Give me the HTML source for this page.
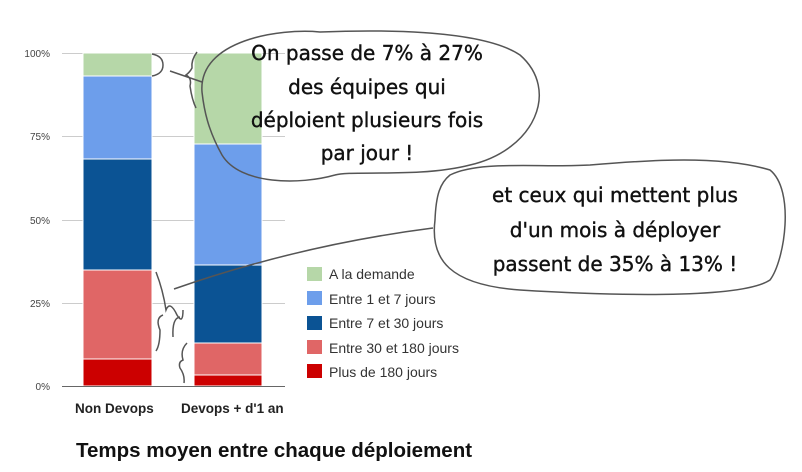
<!DOCTYPE html>
<html><head><meta charset="utf-8"><style>body{margin:0;background:#fff}svg{display:block}</style></head><body>
<svg width="802" height="472" viewBox="0 0 802 472" xmlns="http://www.w3.org/2000/svg" font-family="Liberation Sans, sans-serif">
<rect width="802" height="472" fill="#fff"/>
<g stroke="#ccc" stroke-width="1">
<line x1="62" y1="53.5" x2="285" y2="53.5"/><line x1="62" y1="136.5" x2="285" y2="136.5"/><line x1="62" y1="220.5" x2="285" y2="220.5"/><line x1="62" y1="303.5" x2="285" y2="303.5"/>
</g>
<g font-size="10" fill="#444" text-anchor="end">
<text x="50" y="57">100%</text><text x="50" y="140">75%</text><text x="50" y="224">50%</text><text x="50" y="307">25%</text><text x="50" y="390">0%</text>
</g>
<g stroke="#fff" stroke-width="1">
<rect x="83" y="53" width="69" height="23" fill="#b6d7a8"/>
<rect x="83" y="76" width="69" height="83" fill="#6d9eeb"/>
<rect x="83" y="159" width="69" height="111" fill="#0b5394"/>
<rect x="83" y="270" width="69" height="89" fill="#e06666"/>
<rect x="83" y="359" width="69" height="27" fill="#cc0000"/>
<rect x="194" y="53" width="68" height="91" fill="#b6d7a8"/>
<rect x="194" y="144" width="68" height="121" fill="#6d9eeb"/>
<rect x="194" y="265" width="68" height="78" fill="#0b5394"/>
<rect x="194" y="343" width="68" height="32" fill="#e06666"/>
<rect x="194" y="375" width="68" height="11" fill="#cc0000"/>
</g>
<line x1="62" y1="386.5" x2="285" y2="386.5" stroke="#666" stroke-width="1"/>
<g font-size="13.5" font-weight="bold" fill="#222">
<text x="75" y="413">Non Devops</text><text x="181" y="413">Devops + d'1 an</text>
</g>
<text x="76" y="457" font-size="20.5" font-weight="bold" fill="#111">Temps moyen entre chaque déploiement</text>
<g font-size="14" fill="#333">
<rect x="307" y="267" width="15" height="14" fill="#b6d7a8"/><text x="329" y="279">A la demande</text>
<rect x="307" y="291" width="15" height="14" fill="#6d9eeb"/><text x="329" y="304">Entre 1 et 7 jours</text>
<rect x="307" y="316" width="15" height="14" fill="#0b5394"/><text x="329" y="328">Entre 7 et 30 jours</text>
<rect x="307" y="340" width="15" height="14" fill="#e06666"/><text x="329" y="353">Entre 30 et 180 jours</text>
<rect x="307" y="364" width="15" height="14" fill="#cc0000"/><text x="329" y="377">Plus de 180 jours</text>
</g>
<g fill="none" stroke="#555" stroke-width="1.5">
<path d="M152 54 Q163 56 163 65 Q163 74 152 76"/>
<path d="M170 71 L202 82"/>
<path d="M197 52 Q191 60 192 68 Q190 72 186 75 Q192 78 190 86 Q192 100 196 108"/>
<path d="M156 272 Q163 290 166 310 Q170 300 177 315 Q183 325 183 310"/>
<path d="M163 315 Q155 318 160 330 Q160 345 156 351"/>
<path d="M180 317 Q172 318 173 337"/>
<path d="M187 343 Q180 350 183 360 Q178 362 180 368 Q185 375 184 383"/>
<path d="M174 289 Q300 245 433 228"/>
<path d="M202 92 C198 40 280 28 320 32 C370 30 480 28 520 55 C560 90 535 150 470 165 C420 178 350 170 335 175 C300 185 240 185 222 155 C208 130 204 110 202 92 Z"/>
<path d="M450 175 C480 160 540 168 590 165 C650 160 720 155 770 170 C795 190 785 260 770 280 C740 300 600 295 520 290 C450 285 430 260 435 220 C436 195 440 183 450 175 Z"/>
</g>
<g font-family="DejaVu Sans, sans-serif" font-size="20" fill="#111" text-anchor="middle" stroke="#111" stroke-width="0.4">
<text x="367" y="60">On passe de 7% à 27%</text>
<text x="367" y="94">des équipes qui</text>
<text x="367" y="127">déploient plusieurs fois</text>
<text x="367" y="160">par jour !</text>
<text x="615" y="202">et ceux qui mettent plus</text>
<text x="615" y="237">d'un mois à déployer</text>
<text x="615" y="271">passent de 35% à 13% !</text>
</g>
</svg>
</body></html>
